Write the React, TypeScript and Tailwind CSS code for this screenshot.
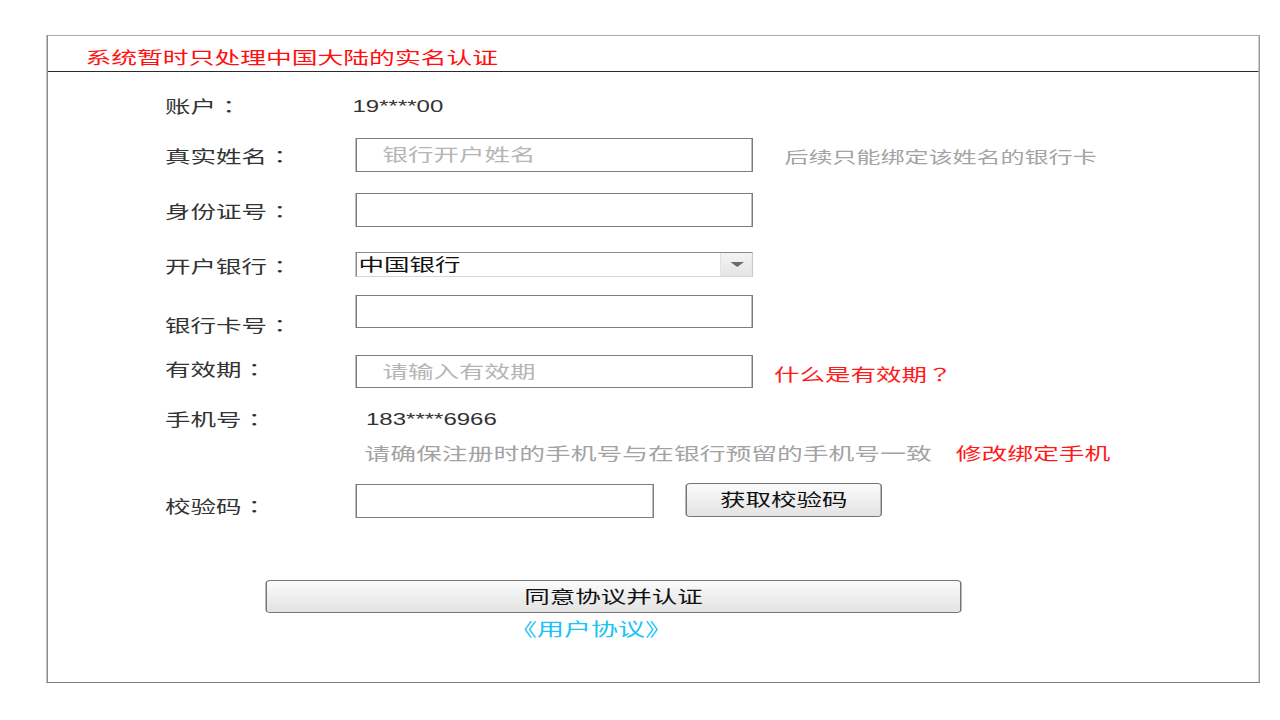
import React from "react";

const FONT = { fontFamily: '"Liberation Sans", "Noto Sans CJK SC", sans-serif' };
const JP = { fontFamily: '"Noto Sans CJK JP", sans-serif' };

function Colon() {
  return <span style={JP}>：</span>;
}

function Label({ children, className = "" }: { children: React.ReactNode; className?: string }) {
  return (
    <div className={"w-[127px] shrink-0 pt-[4px] text-[17px] leading-[24px] text-[#333] " + className}>
      {children}
      <Colon />
    </div>
  );
}

function TextInput({ placeholder, w = "w-[265px]", h = "h-[34px]" }: { placeholder?: string; w?: string; h?: string }) {
  return (
    <input
      readOnly
      placeholder={placeholder}
      className={
        w +
        " " +
        h +
        " shrink-0 border border-[#7d7d7d] bg-white pl-[17px] pt-[2px] text-[17px] text-[#333] outline-none placeholder:text-[#b5b5b5]"
      }
    />
  );
}

export default function App() {
  return (
    <div className="h-[720px] w-[1280px] overflow-hidden bg-white" style={FONT}>
      <div className="w-[853.33px] origin-top-left scale-x-[1.5]">
        <div className="ml-[31px] mt-[35px] flex h-[648px] w-[809px] flex-col border-t border-l border-r-[1.5px] border-b-[1.5px] border-t-[#ababab] border-l-[#8a8a8a] border-r-[#9a9a9a] border-b-[#7a7a7a]">
          {/* header */}
          <div className="flex h-[36px] shrink-0 items-center border-b border-b-[#2a2a2a] pl-[25px] pt-[9px]">
            <span className="text-[17.2px] leading-[24px] text-[#ff1010]">系统暂时只处理中国大陆的实名认证</span>
          </div>

          {/* body */}
          <div className="flex flex-col pl-[78px]">
            {/* 账户 */}
            <div className="mt-[21px] flex h-[24px] items-center">
              <Label>账户</Label>
              <span className="-ml-[2px] pt-[4px] text-[16px] leading-[24px] text-[#333]">19****00</span>
            </div>

            {/* 真实姓名 */}
            <div className="mt-[21px] flex h-[34px] items-center">
              <Label>真实姓名</Label>
              <TextInput placeholder="银行开户姓名" />
              <span className="ml-[21px] mt-[6px] text-[16px] leading-[24px] text-[#a3a3a3]">后续只能绑定该姓名的银行卡</span>
            </div>

            {/* 身份证号 */}
            <div className="mt-[21px] flex h-[34px] items-center">
              <Label>身份证号</Label>
              <TextInput />
            </div>

            {/* 开户银行 */}
            <div className="mt-[25px] flex h-[25px] items-center">
              <Label>开户银行</Label>
              <div className="flex h-[25px] w-[265px] shrink-0 items-stretch border border-t-[#8a8a8a] border-l-[#8a8a8a] border-r-[#c8c8c8] border-b-[#d6d6d6] bg-white">
                <span className="flex-1 pl-[1px] pt-[1px] text-[17px] leading-[23px] text-[#111]">中国银行</span>
                <div className="flex w-[21px] items-center justify-center border-l border-l-[#e2e2e2] bg-gradient-to-b from-[#f4f4f4] to-[#e4e4e4]">
                  <svg width="9" height="5" viewBox="0 0 9 5">
                    <path d="M0 0 H9 L4.5 5 Z" fill="#6a6a6a" />
                  </svg>
                </div>
              </div>
            </div>

            {/* 银行卡号 */}
            <div className="mt-[18px] flex h-[33px] items-start">
              <Label className="mt-[14px]">银行卡号</Label>
              <TextInput h="h-[33px]" />
            </div>

            {/* 有效期 */}
            <div className="mt-[27px] flex h-[33px] items-center">
              <Label className="-mt-[7px]">有效期</Label>
              <TextInput placeholder="请输入有效期" h="h-[33px]" />
              <span className="ml-[14px] mt-[6px] text-[17px] leading-[24px] text-[#ff1a1a]">
                什么是有效期<span style={JP}>？</span>
              </span>
            </div>

            {/* 手机号 */}
            <div className="mt-[18px] flex h-[24px] items-center">
              <Label>手机号</Label>
              <span className="ml-[7px] pt-[4px] text-[16px] leading-[24px] text-[#333]">183****6966</span>
            </div>

            {/* 提示 */}
            <div className="mt-[10px] flex h-[24px] items-center pl-[133px] pt-[4px]">
              <span className="text-[17.2px] leading-[24px] text-[#a3a3a3]">请确保注册时的手机号与在银行预留的手机号一致</span>
              <span className="ml-[16px] text-[17.2px] leading-[24px] text-[#ff1a1a]">修改绑定手机</span>
            </div>

            {/* 校验码 */}
            <div className="mt-[20px] flex h-[34px] items-start">
              <Label className="mt-[6px]">校验码</Label>
              <TextInput w="w-[199px]" />
              <button className="-mt-[1px] ml-[21px] flex h-[34px] w-[131px] items-center justify-center rounded-[3px] border border-[#767676] bg-gradient-to-b from-[#fbfbfb] to-[#e3e3e3] pt-[2px] text-[17px] leading-[24px] text-[#111]">
                获取校验码
              </button>
            </div>

            {/* 同意协议并认证 */}
            <button className="ml-[67px] mt-[62px] flex h-[33px] w-[464px] items-center justify-center rounded-[3px] border border-[#767676] bg-gradient-to-b from-[#fbfbfb] to-[#e3e3e3] pt-[2px] text-[17px] leading-[24px] text-[#111]">
              同意协议并认证
            </button>

            {/* 用户协议 */}
            <div className="ml-[230px] mt-[5px] h-[24px] text-[18px] leading-[24px] text-[#1cc3f5]">《用户协议》</div>
          </div>
        </div>
      </div>
    </div>
  );
}
